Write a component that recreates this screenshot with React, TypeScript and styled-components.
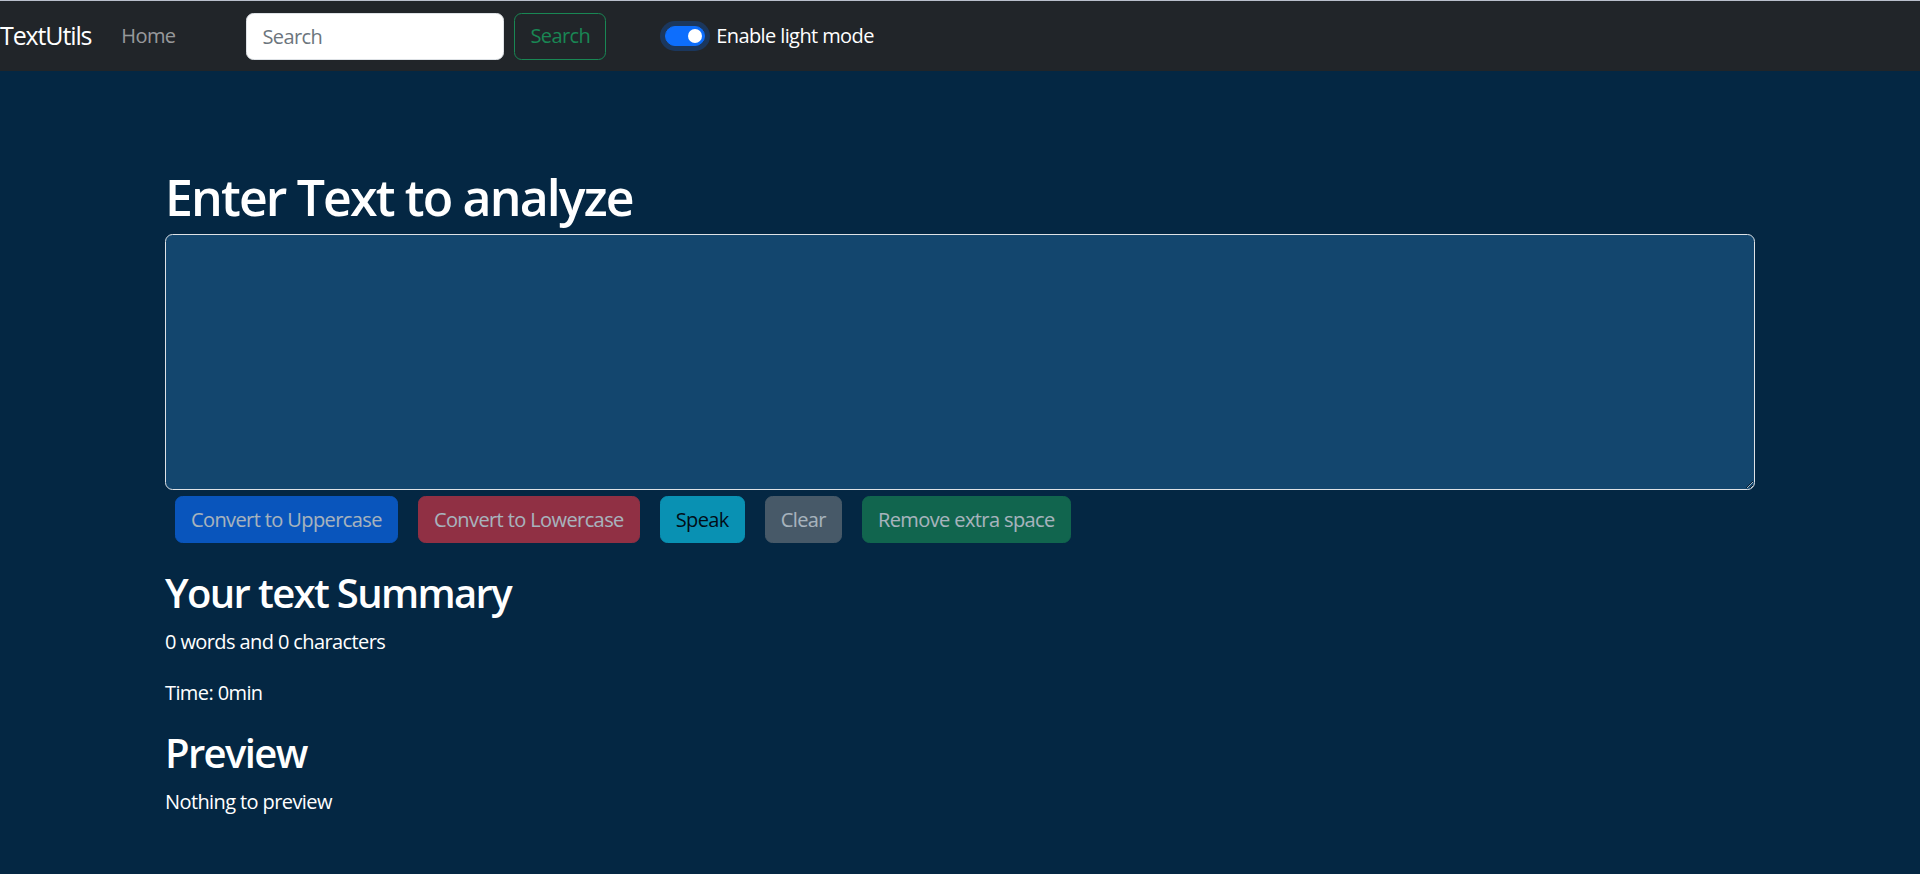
import React from "react";
import styled, { createGlobalStyle } from "styled-components";

const GlobalStyle = createGlobalStyle`
  html, body {
    margin: 0;
    padding: 0;
    background: #042743;
  }
  body {
    font-family: "Segoe UI", "Open Sans", "Noto Sans", sans-serif;
    font-size: 20px;
    line-height: 1.5;
    letter-spacing: -0.03em;
    color: #ffffff;
  }
  * { box-sizing: border-box; }
`;

const Nav = styled.nav`
  display: flex;
  align-items: center;
  height: 71px;
  background: #212529;
  border-top: 1px solid #b9bfcc;
`;

const Brand = styled.a`
  font-size: 25px;
  line-height: 1.5;
  letter-spacing: -0.045em;
  color: #ffffff;
  margin-right: 20px;
  text-decoration: none;
`;

const NavLink = styled.a`
  padding: 10px;
  font-size: 20px;
  color: rgba(255, 255, 255, 0.55);
  text-decoration: none;
`;

const SearchForm = styled.form`
  display: flex;
  gap: 10px;
  margin-left: 61px;
`;

const SearchInput = styled.input`
  width: 258px;
  height: 47px;
  padding: 7.5px 15px;
  font-family: inherit;
  letter-spacing: inherit;
  font-size: 20px;
  color: #212529;
  background: #ffffff;
  border: 1px solid #dee2e6;
  border-radius: 7.5px;
  outline: none;
  &::placeholder {
    color: #6c757d;
  }
`;

const OutlineButton = styled.button`
  height: 47px;
  padding: 7.5px 15px;
  font-family: inherit;
  letter-spacing: inherit;
  font-size: 20px;
  line-height: 1.5;
  color: #198754;
  background: transparent;
  border: 1px solid #198754;
  border-radius: 7.5px;
`;

const SwitchWrap = styled.label`
  display: flex;
  align-items: center;
  margin-left: 59px;
  gap: 11px;
  cursor: pointer;
`;

const SwitchTrack = styled.span`
  display: flex;
  align-items: center;
  justify-content: flex-end;
  width: 40px;
  height: 20px;
  padding: 0 2px;
  background: #0d6efd;
  border: 1px solid #0d6efd;
  border-radius: 20px;
  box-shadow: 0 0 0 5px rgba(13, 110, 253, 0.25);
`;

const SwitchKnob = styled.span`
  width: 14px;
  height: 14px;
  border-radius: 50%;
  background: #ffffff;
`;

const SwitchText = styled.span`
  font-size: 20px;
  color: #ffffff;
`;

const Main = styled.main`
  width: 1590px;
  margin: 0 auto;
  padding-top: 96px;
`;

const Heading = styled.h1`
  margin: 0 0 7px;
  font-size: 50px;
  font-weight: 600;
  line-height: 1.2;
  letter-spacing: -0.037em;
`;

const TextArea = styled.textarea`
  display: block;
  width: 100%;
  height: 256px;
  padding: 7.5px 15px;
  font-family: inherit;
  letter-spacing: inherit;
  font-size: 20px;
  color: #ffffff;
  background: #13466e;
  border: 1px solid #dee2e6;
  border-radius: 7.5px;
  outline: none;
`;

const ButtonRow = styled.div`
  display: flex;
  gap: 20px;
  padding: 0 10px;
  margin: 6px 0 5px;
`;

const Button = styled.button<{ $bg: string; $fg: string }>`
  height: 47px;
  padding: 7.5px 15px;
  font-family: inherit;
  letter-spacing: inherit;
  font-size: 20px;
  line-height: 1.5;
  color: ${(p) => p.$fg};
  background: ${(p) => p.$bg};
  border: 1px solid ${(p) => p.$bg};
  border-radius: 7.5px;
  opacity: 0.65;
`;

const Summary = styled.section`
  margin-top: 26px;
`;

const SubHeading = styled.h2`
  margin: 0 0 10px;
  font-size: 40px;
  font-weight: 600;
  line-height: 1.2;
  letter-spacing: -0.041em;
`;

const Para = styled.p`
  margin: 0 0 21px;
  font-size: 20px;
  line-height: 1.5;
`;

const buttons = [
  { label: "Convert to Uppercase", bg: "#0d6efd", fg: "#ffffff" },
  { label: "Convert to Lowercase", bg: "#dc3545", fg: "#ffffff" },
  { label: "Speak", bg: "#0dcaf0", fg: "#000000" },
  { label: "Clear", bg: "#6c757d", fg: "#ffffff" },
  { label: "Remove extra space", bg: "#198754", fg: "#ffffff" },
];

export default function App() {
  return (
    <>
      <GlobalStyle />
      <Nav>
        <Brand href="#">TextUtils</Brand>
        <NavLink href="#">Home</NavLink>
        <SearchForm onSubmit={(e) => e.preventDefault()}>
          <SearchInput type="search" placeholder="Search" />
          <OutlineButton type="submit">Search</OutlineButton>
        </SearchForm>
        <SwitchWrap>
          <SwitchTrack>
            <SwitchKnob />
          </SwitchTrack>
          <SwitchText>Enable light mode</SwitchText>
        </SwitchWrap>
      </Nav>
      <Main>
        <Heading>Enter Text to analyze</Heading>
        <TextArea rows={8} />
        <ButtonRow>
          {buttons.map((b) => (
            <Button key={b.label} $bg={b.bg} $fg={b.fg} disabled>
              {b.label}
            </Button>
          ))}
        </ButtonRow>
        <Summary>
          <SubHeading>Your text Summary</SubHeading>
          <Para>0 words and 0 characters</Para>
          <Para>Time: 0min</Para>
          <SubHeading>Preview</SubHeading>
          <Para>Nothing to preview</Para>
        </Summary>
      </Main>
    </>
  );
}
